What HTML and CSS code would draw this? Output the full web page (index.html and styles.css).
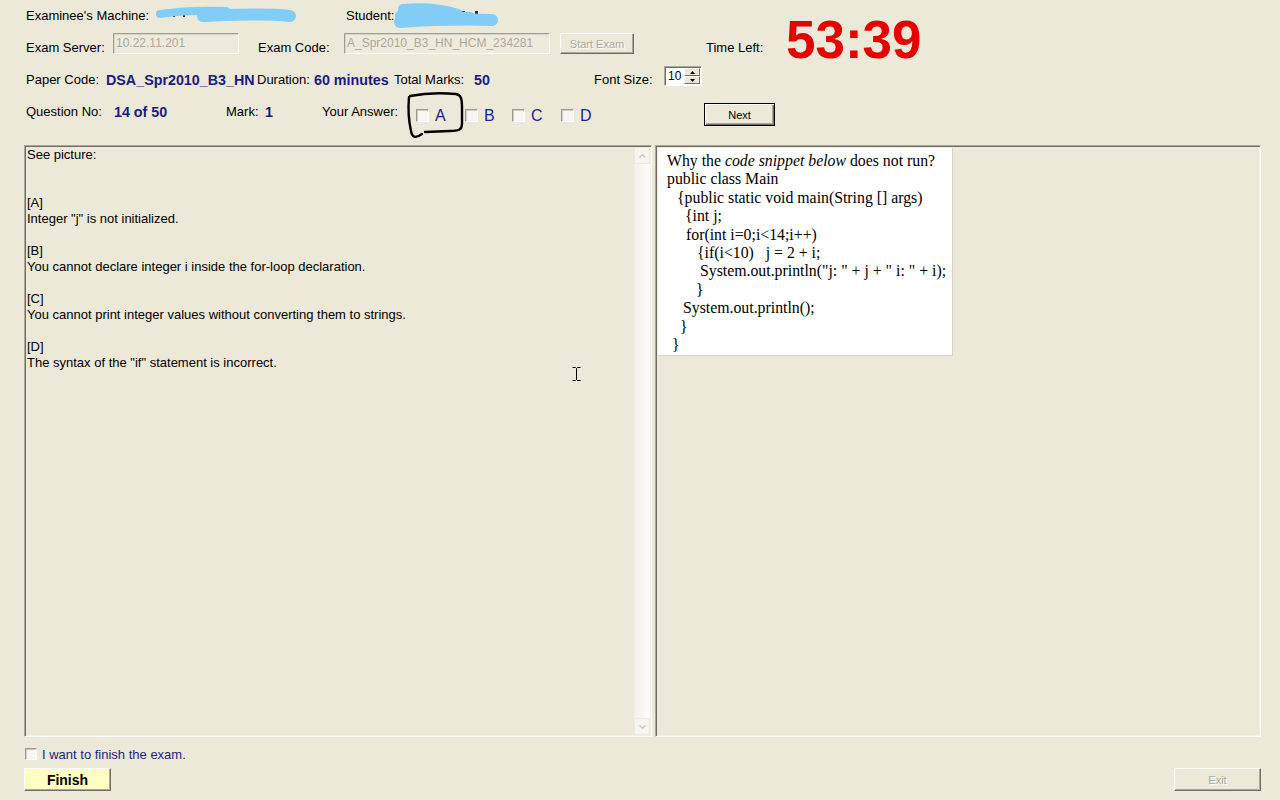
FILE: index.html
```html
<!DOCTYPE html>
<html>
<head>
<meta charset="utf-8">
<title>Exam</title>
<link rel="stylesheet" href="styles.css">
</head>
<body>
<header class="header">
  <div class="row r1">
    <span class="lbl w320">Examinee's Machine:</span>
    <span class="lbl">Student:</span>
  </div>
  <div class="row r2">
    <span class="lbl w87">Exam Server:</span>
    <div class="field w126">10.22.11.201</div>
    <span class="lbl w86 ml19">Exam Code:</span>
    <div class="field w206">A_Spr2010_B3_HN_HCM_234281</div>
    <div class="btn start">Start Exam</div>
    <span class="lbl w80 ml72">Time Left:</span>
    <div class="timer">53:39</div>
  </div>
  <div class="row r3">
    <span class="lbl w80">Paper Code:</span>
    <span class="val w151">DSA_Spr2010_B3_HN</span>
    <span class="lbl w57">Duration:</span>
    <span class="val w80">60 minutes</span>
    <span class="lbl w80">Total Marks:</span>
    <span class="val w120">50</span>
    <span class="lbl w70">Font Size:</span>
    <div class="spin">
      <span class="spin-val">10</span>
      <div class="spin-btns">
        <span class="spin-b"><svg width="5" height="3" viewBox="0 0 5 3"><path d="M0 3h5L2.5 0z" fill="#000"/></svg></span>
        <span class="spin-b"><svg width="5" height="3" viewBox="0 0 5 3"><path d="M0 0h5L2.5 3z" fill="#000"/></svg></span>
      </div>
    </div>
  </div>
  <div class="row r4">
    <span class="lbl w88">Question No:</span>
    <span class="val w112">14 of 50</span>
    <span class="lbl w39">Mark:</span>
    <span class="val w57">1</span>
    <span class="lbl w94">Your Answer:</span>
    <div class="opt w49"><span class="cb"></span><span class="letter">A</span></div>
    <div class="opt w47"><span class="cb"></span><span class="letter">B</span></div>
    <div class="opt w49"><span class="cb"></span><span class="letter">C</span></div>
    <div class="opt w49"><span class="cb"></span><span class="letter">D</span></div>
    <div class="btn next">Next</div>
  </div>
</header>

<main class="main">
  <section class="panel left">
    <div class="qtext">
      <div>See picture:</div>
      <div class="blank"></div>
      <div class="blank"></div>
      <div>[A]</div>
      <div>Integer "j" is not initialized.</div>
      <div class="blank"></div>
      <div>[B]</div>
      <div>You cannot declare integer i inside the for-loop declaration.</div>
      <div class="blank"></div>
      <div>[C]</div>
      <div>You cannot print integer values without converting them to strings.</div>
      <div class="blank"></div>
      <div>[D]</div>
      <div>The syntax of the "if" statement is incorrect.</div>
    </div>
    <div class="scroll">
      <span class="sbtn"><svg width="7" height="4" viewBox="0 0 7 4"><path d="M0.5 3.5L3.5 0.8L6.5 3.5" fill="none" stroke="#c9c7bd" stroke-width="1.3"/></svg></span>
      <span class="strack"></span>
      <span class="sbtn"><svg width="7" height="4" viewBox="0 0 7 4"><path d="M0.5 0.5L3.5 3.2L6.5 0.5" fill="none" stroke="#c9c7bd" stroke-width="1.3"/></svg></span>
    </div>
  </section>
  <section class="panel right">
    <div class="pic">
      <div>Why the <i>code snippet below</i> does not run?</div>
      <div>public class Main</div>
      <div class="in10">{public static void main(String [] args)</div>
      <div class="in18">{int j;</div>
      <div class="in19">for(int i=0;i&lt;14;i++)</div>
      <div class="in30">{if(i&lt;10) &nbsp; j = 2 + i;</div>
      <div class="in33">System.out.println("j: " + j + " i: " + i);</div>
      <div class="in29">}</div>
      <div class="in16">System.out.println();</div>
      <div class="in13">}</div>
      <div class="in5">}</div>
    </div>
  </section>
</main>

<footer class="footer">
  <div class="fin-col">
    <div class="fin-row"><span class="cb small"></span><span class="fin-lbl">I want to finish the exam.</span></div>
    <div class="btn finish">Finish</div>
  </div>
  <div class="btn exit">Exit</div>
</footer>

<svg class="overlay" width="1280" height="145" viewBox="0 0 1280 145">
  <g fill="#1c1c80">
    <rect x="163" y="15" width="2" height="2"/>
    <rect x="173" y="15" width="2" height="2"/>
    <rect x="183" y="15" width="2" height="2"/>
    <rect x="285" y="11" width="3" height="4"/>
    <rect x="462" y="11" width="3" height="4"/>
    <rect x="475" y="11" width="3" height="4"/>
  </g>
  <g stroke="#82cdf8" stroke-linecap="round" fill="none">
    <path d="M160 14 C180 11 200 10 226 11" stroke-width="8"/>
    <path d="M203 16 C230 15 262 13 290 16" stroke-width="12"/>
    <path d="M403 9 C425 7 445 10 458 14" stroke-width="10"/>
    <path d="M401 16 L470 18" stroke-width="12"/>
    <path d="M400 22 C430 20 465 19 492 20" stroke-width="12"/>
  </g>
  <path d="M410 96 C425 93 445 93 456 94 C461 95 462 99 462 106 L462 124 C462 130 458 131 450 131 L425 132 M409 97 C408 108 409 122 411 131 C412 137 415 139 422 134" fill="none" stroke="#000" stroke-width="2.4" stroke-linecap="round"/>
</svg>
<svg class="ibeam" width="11" height="16" viewBox="0 0 11 16">
  <path d="M1.5 1.5h3l1 1 1-1h3M5.5 2.5v11M1.5 14.5h3l1-1 1 1h3" fill="none" stroke="#000" stroke-width="1"/>
</svg>
</body>
</html>
```

FILE: styles.css
```css
html, body {
  margin: 0;
  padding: 0;
}
body {
  background: #ece9d8;
  font-family: "Liberation Sans", Arial, sans-serif;
  font-size: 13px;
  color: #000;
  width: 1280px;
  height: 800px;
  overflow: hidden;
  position: relative;
}

.header {
  padding-left: 26px;
  height: 140px;
}
.row {
  display: flex;
  align-items: flex-start;
}
.r1 { height: 32px; align-items: center; }
.r2 { height: 25px; }
.r3 { height: 35px; }
.r4 { height: 48px; }

.lbl {
  line-height: 16px;
  white-space: nowrap;
  flex: none;
}
.val {
  font-weight: bold;
  font-size: 14.3px;
  color: #1a1a80;
  line-height: 16px;
  white-space: nowrap;
  flex: none;
}
.r2 .lbl { margin-top: 8px; }
.r3 .lbl, .r3 .val { margin-top: 15px; }
.r4 .lbl, .r4 .val { margin-top: 12px; }

.w320 { width: 320px; }
.w87 { width: 87px; }
.w86 { width: 86px; }
.w80 { width: 80px; }
.w151 { width: 151px; }
.w57 { width: 57px; }
.w120 { width: 120px; }
.w70 { width: 70px; }
.w88 { width: 88px; }
.w112 { width: 112px; }
.w39 { width: 39px; }
.w94 { width: 94px; }
.w49 { width: 49px; }
.w47 { width: 47px; }
.ml19 { margin-left: 19px; }
.ml72 { margin-left: 72px; }

.field {
  flex: none;
  margin-top: 1px;
  height: 21px;
  box-sizing: border-box;
  border: 1px solid;
  border-color: #a19f94 #fbfaf6 #fbfaf6 #a19f94;
  box-shadow: inset 1px 1px 0 #d6d3c6;
  background: #eeebdd;
  color: #aca899;
  font-size: 12px;
  line-height: 18px;
  padding: 0 2px;
  white-space: nowrap;
  overflow: hidden;
}
.w126 { width: 126px; }
.w206 { width: 206px; }

.btn {
  flex: none;
  box-sizing: border-box;
  display: flex;
  align-items: center;
  justify-content: center;
  background: #ece9d8;
  border: 1px solid;
  border-color: #fff #716f64 #716f64 #fff;
  box-shadow: inset -1px -1px 0 #aca899;
  font-size: 11px;
  white-space: nowrap;
}
.start {
  margin-top: 1px;
  margin-left: 10px;
  width: 74px;
  height: 21px;
  color: #aca899;
  text-shadow: 1px 1px 0 #fff;
}
.next {
  margin-top: 11px;
  margin-left: 94px;
  width: 71px;
  height: 23px;
  border: 1px solid #000;
  box-shadow: inset 1px 1px 0 #fff, inset -1px -1px 0 #716f64, inset -2px -2px 0 #aca899;
}

.timer {
  flex: none;
  margin-top: -18px;
  font-size: 53px;
  line-height: 52px;
  font-weight: bold;
  color: #e60000;
}

.spin {
  flex: none;
  margin-top: 9px;
  width: 38px;
  height: 20px;
  box-sizing: border-box;
  border: 1px solid;
  border-color: #aca899 #fff #fff #aca899;
  box-shadow: inset 1px 1px 0 #716f64;
  background: #fff;
  display: flex;
}
.spin-val {
  flex: 1;
  font-size: 12px;
  line-height: 18px;
  padding-left: 3px;
}
.spin-btns {
  width: 16px;
  display: flex;
  flex-direction: column;
  padding: 1px 1px 1px 0;
}
.spin-b {
  flex: 1;
  display: flex;
  align-items: center;
  justify-content: center;
  background: #ece9d8;
  border: 1px solid;
  border-color: #fff #716f64 #716f64 #fff;
}

.opt {
  flex: none;
  display: flex;
  margin-top: 17px;
}
.cb {
  flex: none;
  display: block;
  width: 13px;
  height: 13px;
  box-sizing: border-box;
  border: 1px solid;
  border-color: #9c9a90 #fff #fff #9c9a90;
  box-shadow: inset 1px 1px 0 #cfccc0;
  background: #f7f6f1;
}
.letter {
  margin-left: 6px;
  font-size: 16px;
  line-height: 13px;
  color: #1c1ca8;
}

.main {
  display: flex;
  gap: 3px;
  margin: 5px 19px 0 24px;
  height: 592px;
}
.panel {
  box-sizing: border-box;
  border: 1px solid;
  border-color: #aca899 #fff #fff #aca899;
  padding: 1px;
  box-shadow: inset 1px 1px 0 #716f64, inset -1px -1px 0 #f1efe2;
  display: flex;
}
.left { width: 628px; flex: none; }
.right { flex: 1; align-items: flex-start; }

.qtext {
  flex: 1;
  padding-left: 1px;
  line-height: 16px;
}
.blank { height: 16px; }

.scroll {
  width: 16px;
  display: flex;
  flex-direction: column;
  background: linear-gradient(90deg, #f2f0e7, #fdfdfb);
}
.sbtn {
  height: 15px;
  display: flex;
  align-items: center;
  justify-content: center;
  border: 1px solid #ebe9e0;
  background: #f6f5f0;
}
.strack { flex: 1; }

.pic {
  margin: 1px 0 0 1px;
  width: 295px;
  height: 208px;
  box-sizing: border-box;
  background: #fff;
  border-right: 1px solid #d6d3c8;
  border-bottom: 1px solid #d6d3c8;
  padding: 4px 0 0 9px;
  font-family: "Liberation Serif", "Times New Roman", serif;
  font-size: 15.8px;
  line-height: 18.4px;
  white-space: nowrap;
  overflow: hidden;
}
.in5 { padding-left: 5px; }
.in10 { padding-left: 10px; }
.in13 { padding-left: 13px; }
.in16 { padding-left: 16px; }
.in18 { padding-left: 18px; }
.in19 { padding-left: 19px; }
.in29 { padding-left: 29px; }
.in30 { padding-left: 30px; }
.in33 { padding-left: 33px; }

.footer {
  display: flex;
  justify-content: space-between;
  align-items: flex-end;
  margin: 0 19px 0 24px;
}
.fin-row {
  display: flex;
  align-items: center;
  margin-top: 9px;
  height: 16px;
}
.cb.small {
  width: 12px;
  height: 12px;
  margin-left: 1px;
}
.fin-lbl {
  margin-left: 5px;
  color: #1c1c8a;
}
.finish {
  margin-top: 6px;
  width: 87px;
  height: 23px;
  background: #ffffc4;
  font-weight: bold;
  font-size: 14px;
}
.exit {
  width: 87px;
  height: 23px;
  color: #aca899;
  text-shadow: 1px 1px 0 #fff;
}

.overlay {
  position: absolute;
  top: 0;
  left: 0;
  pointer-events: none;
}
.ibeam {
  position: absolute;
  left: 571px;
  top: 366px;
  pointer-events: none;
}
```
